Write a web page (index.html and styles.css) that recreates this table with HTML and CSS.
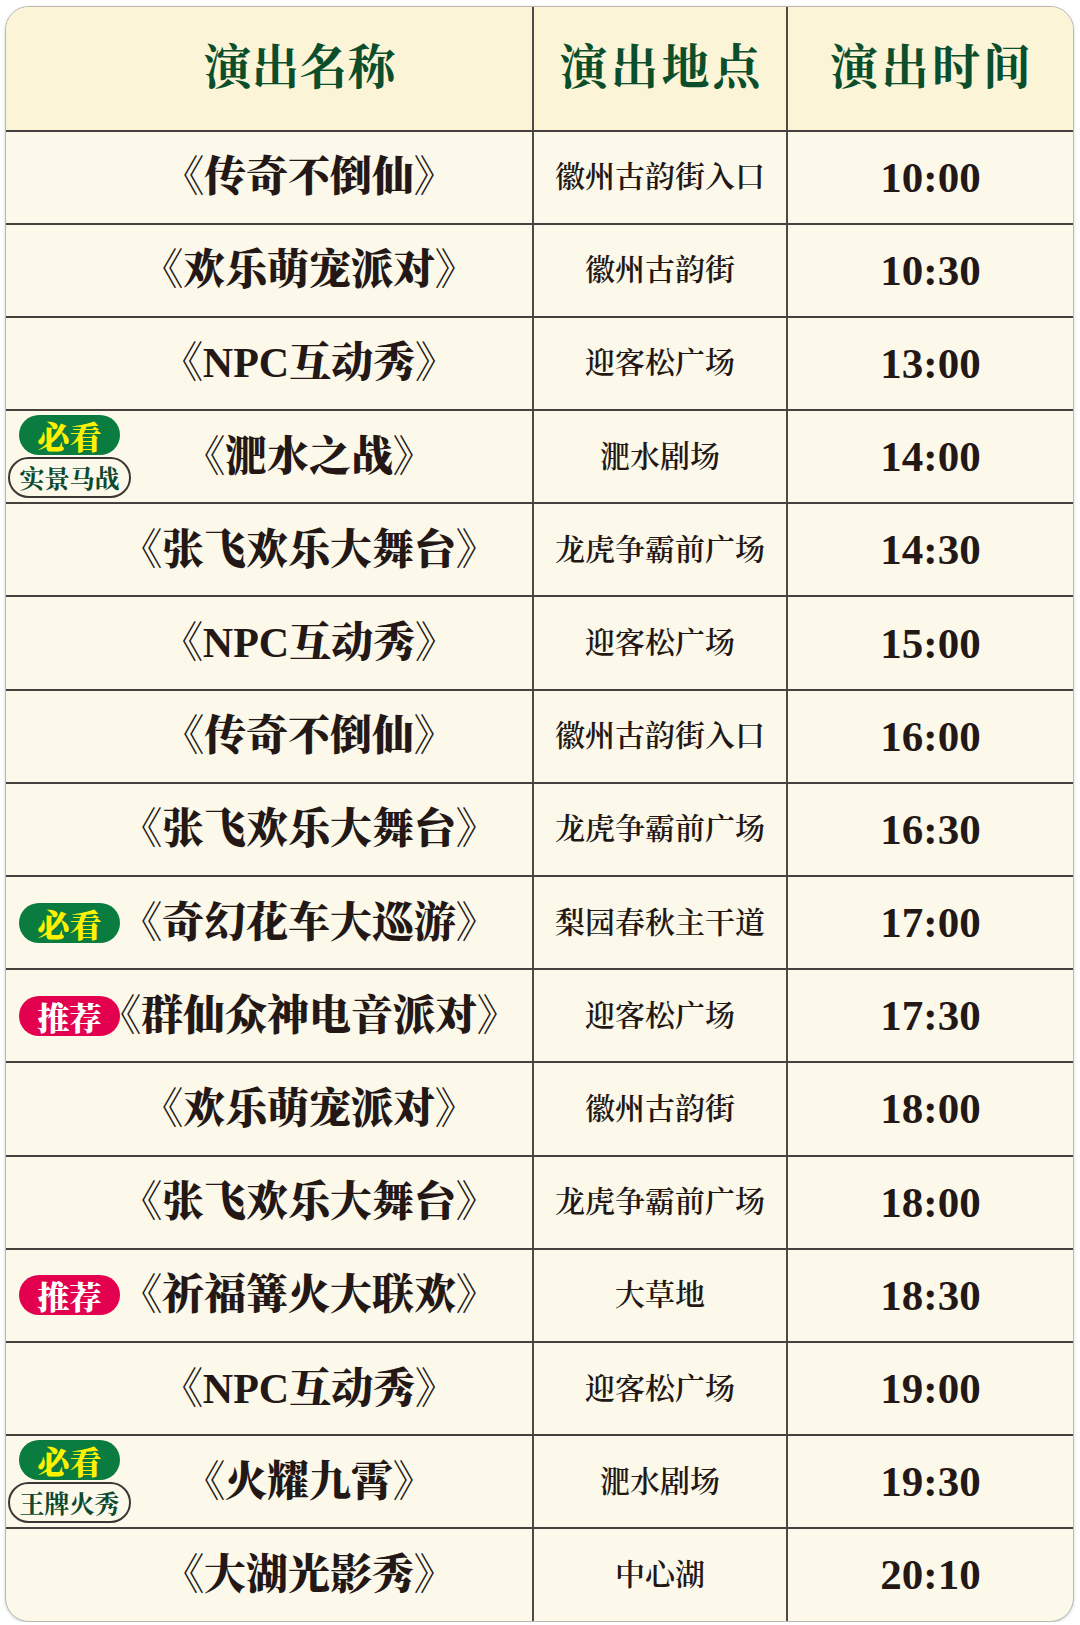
FILE: index.html
```html
<!DOCTYPE html>
<html lang="zh-CN">
<head>
<meta charset="utf-8">
<title>演出时间表</title>
<link rel="stylesheet" href="styles.css">
</head>
<body>
<div class="schedule">
  <div class="row head">
    <div class="cell name-h">演出名称</div>
    <div class="cell head-wide">演出地点</div>
    <div class="cell head-wide">演出时间</div>
  </div>

  <div class="row">
    <div class="cell name">《传奇不倒仙》</div>
    <div class="cell place">徽州古韵街入口</div>
    <div class="cell time">10:00</div>
  </div>
  <div class="row">
    <div class="cell name">《欢乐萌宠派对》</div>
    <div class="cell place">徽州古韵街</div>
    <div class="cell time">10:30</div>
  </div>
  <div class="row">
    <div class="cell name">《NPC互动秀》</div>
    <div class="cell place">迎客松广场</div>
    <div class="cell time">13:00</div>
  </div>
  <div class="row">
    <div class="cell name">
      <div class="badges"><span class="pill must">必看</span><span class="pill outline">实景马战</span></div>
      《淝水之战》
    </div>
    <div class="cell place">淝水剧场</div>
    <div class="cell time">14:00</div>
  </div>
  <div class="row">
    <div class="cell name">《张飞欢乐大舞台》</div>
    <div class="cell place">龙虎争霸前广场</div>
    <div class="cell time">14:30</div>
  </div>
  <div class="row">
    <div class="cell name">《NPC互动秀》</div>
    <div class="cell place">迎客松广场</div>
    <div class="cell time">15:00</div>
  </div>
  <div class="row">
    <div class="cell name">《传奇不倒仙》</div>
    <div class="cell place">徽州古韵街入口</div>
    <div class="cell time">16:00</div>
  </div>
  <div class="row">
    <div class="cell name">《张飞欢乐大舞台》</div>
    <div class="cell place">龙虎争霸前广场</div>
    <div class="cell time">16:30</div>
  </div>
  <div class="row">
    <div class="cell name">
      <div class="badges single"><span class="pill must">必看</span></div>
      《奇幻花车大巡游》
    </div>
    <div class="cell place">梨园春秋主干道</div>
    <div class="cell time">17:00</div>
  </div>
  <div class="row">
    <div class="cell name">
      <div class="badges single"><span class="pill rec">推荐</span></div>
      《群仙众神电音派对》
    </div>
    <div class="cell place">迎客松广场</div>
    <div class="cell time">17:30</div>
  </div>
  <div class="row">
    <div class="cell name">《欢乐萌宠派对》</div>
    <div class="cell place">徽州古韵街</div>
    <div class="cell time">18:00</div>
  </div>
  <div class="row">
    <div class="cell name">《张飞欢乐大舞台》</div>
    <div class="cell place">龙虎争霸前广场</div>
    <div class="cell time">18:00</div>
  </div>
  <div class="row">
    <div class="cell name">
      <div class="badges single"><span class="pill rec">推荐</span></div>
      《祈福篝火大联欢》
    </div>
    <div class="cell place">大草地</div>
    <div class="cell time">18:30</div>
  </div>
  <div class="row">
    <div class="cell name">《NPC互动秀》</div>
    <div class="cell place">迎客松广场</div>
    <div class="cell time">19:00</div>
  </div>
  <div class="row">
    <div class="cell name">
      <div class="badges"><span class="pill must">必看</span><span class="pill outline">王牌火秀</span></div>
      《火耀九霄》
    </div>
    <div class="cell place">淝水剧场</div>
    <div class="cell time">19:30</div>
  </div>
  <div class="row">
    <div class="cell name">《大湖光影秀》</div>
    <div class="cell place">中心湖</div>
    <div class="cell time">20:10</div>
  </div>
</div>
</body>
</html>
```

FILE: styles.css
```css
html, body {
  margin: 0;
  padding: 0;
  background: #ffffff;
}

body {
  font-family: "Liberation Serif", "Noto Serif CJK SC", "Noto Sans CJK SC", serif;
  color: #231815;
}

.schedule {
  box-sizing: border-box;
  width: 1069px;
  margin: 6px 0 0 5px;
  border: 1.5px solid #bcb7b0;
  border-radius: 24px;
  overflow: hidden;
  background: #fcf9eb;
  box-shadow: 0 1px 3px rgba(40, 90, 90, 0.25);
  display: flex;
  flex-direction: column;
}

.row {
  box-sizing: border-box;
  display: grid;
  grid-template-columns: 526px 254px 1fr;
  height: 93.2px;
  border-top: 2px solid #46413e;
}

.row.head {
  height: 122.5px;
  border-top: none;
  background: #fcf4d7;
  color: #0b4e2c;
  font-size: 48px;
  font-weight: 700;
}

.cell {
  box-sizing: border-box;
  display: flex;
  align-items: center;
  justify-content: center;
  line-height: 1;
  white-space: nowrap;
}

.cell + .cell {
  border-left: 2px solid #4f4a46;
}

.name-h {
  padding-left: 61px;
}

.head-wide {
  letter-spacing: 3px;
  padding-left: 3px;
}

.name {
  position: relative;
  padding-left: 80px;
  font-size: 42px;
  font-weight: 900;
}

.place {
  font-size: 30px;
  font-weight: 600;
}

.time {
  font-size: 43px;
  font-weight: 700;
}

.badges {
  position: absolute;
  left: 2px;
  top: 0;
  bottom: 0;
  width: 123px;
  display: flex;
  flex-direction: column;
  align-items: center;
  justify-content: center;
  gap: 2px;
}

.pill {
  box-sizing: border-box;
  display: flex;
  align-items: center;
  justify-content: center;
  font-family: "Noto Serif CJK SC", "Noto Sans CJK SC", serif;
  font-weight: 900;
  line-height: 1;
}

.pill.must,
.pill.rec {
  width: 101px;
  height: 40px;
  border-radius: 20px;
  font-size: 32px;
}

.pill.must {
  background: #0b7c40;
  color: #fff200;
}

.pill.rec {
  background: #e2004f;
  color: #ffffff;
}

.pill.outline {
  width: 123px;
  height: 41px;
  border: 2px solid #3b3735;
  border-radius: 21px;
  font-size: 25px;
  font-weight: 700;
  color: #0d4a30;
}
```
